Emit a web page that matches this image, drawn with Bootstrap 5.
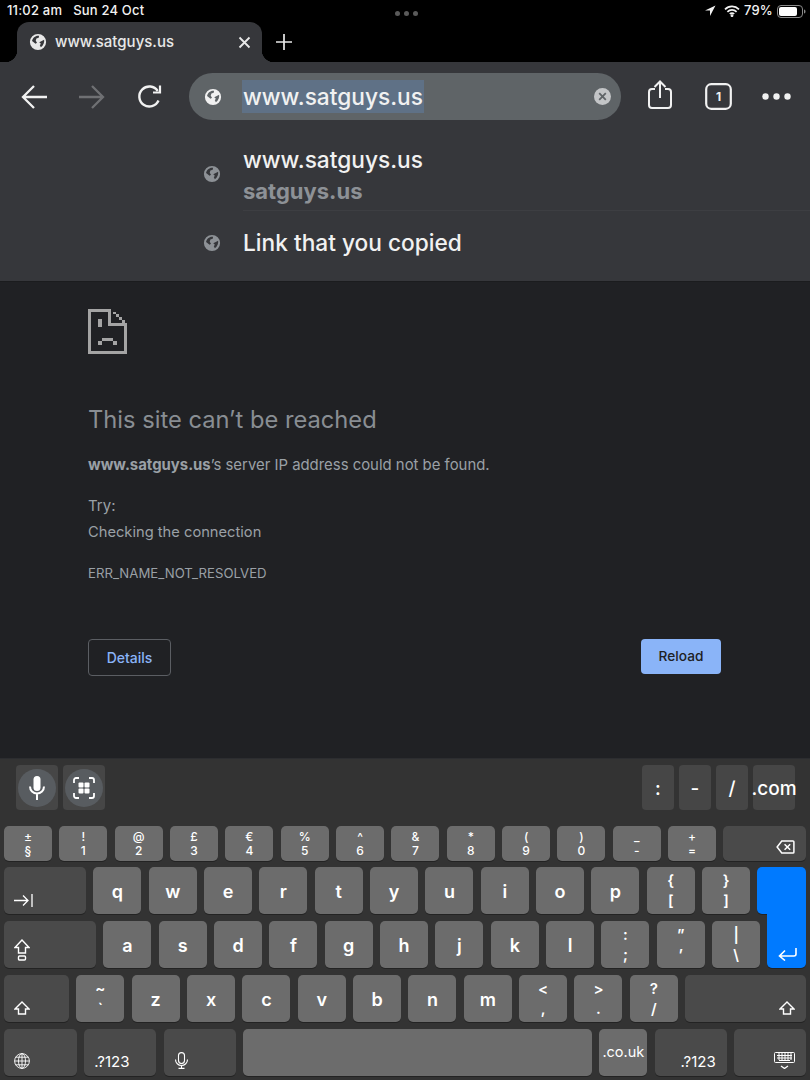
<!DOCTYPE html>
<html lang="en">
<head>
    <meta charset="UTF-8">
    <meta name="viewport" content="width=device-width, initial-scale=1.0">
    <title>This site can't be reached</title>
    <link href="https://cdn.jsdelivr.net/npm/bootstrap@5.3.0/dist/css/bootstrap.min.css" rel="stylesheet">
    <style>
        html, body { width: 810px; height: 1080px; overflow: hidden; background: #000; }
        body { font-family: Inter, "Liberation Sans", sans-serif; color: #fff; }
        .status-strip { height: 22px; padding: 0 4px 0 7px; font-size: 13px; font-weight: 500; letter-spacing: .2px; color: #f2f2f2; }
        .status-strip > div { flex: 1 1 0; }
        .status-dots span { width: 5px; height: 5px; border-radius: 50%; background: #5a5a5a; }
        .tab-strip { height: 40px; padding-left: 17px; }
        .chrome-tab { position: relative; width: 245px; background: #36373b; border-radius: 12px 12px 0 0; padding: 0 11px 0 12px; font-size: 15px; font-weight: 500; color: #e8e8e8; }
        .chrome-tab::before, .chrome-tab::after { content: ""; position: absolute; bottom: 0; width: 12px; height: 12px; }
        .chrome-tab::before { left: -12px; background: radial-gradient(circle at 0 0, #000 12px, #36373b 12.5px); }
        .chrome-tab::after { right: -12px; background: radial-gradient(circle at 100% 0, #000 12px, #36373b 12.5px); }
        .tab-title { margin-left: 8px; }
        .plus-btn { margin-left: 5px; }
        .tool-area { height: 220px; background: #36373b; border-bottom: 1px solid #1b1c1e; }
        .nav-row { height: 58px; padding: 11px 5px 0; }
        .tool-btn { width: 58px; height: 47px; }
        .omni-box { width: 432px; height: 47px; margin: 0 10px; background: #5f6467; border-radius: 24px; padding: 0 10px 0 15px; }
        .omni-sel { margin-left: 20px; height: 33px; background: #5f7186; padding: 0 1px; font-size: 22.7px; font-weight: 500; line-height: 34px; color: #f1f1f1; }
        .sugg-row { padding-left: 243px; position: relative; font-size: 22.7px; font-weight: 500; color: #f1f1f1; }
        .sugg-first { margin-top: 20px; height: 71px; }
        .sugg-first .sugg-inner { border-bottom: 1px solid #3d3e42; height: 71px; padding-top: 3px; }
        .sugg-second { height: 64px; }
        .sugg-ico { position: absolute; left: 203px; }
        .sugg-first .sugg-ico { margin-top: -3px; }
        .sugg-sub { font-size: 22px; font-weight: 700; color: #8d9196; line-height: 28px; }
        .sugg-main { line-height: 34px; }
        .page-area { height: 476px; background: #202124; padding: 26px 89px 0 88px; color: #9aa0a6; }
        .sad-page { margin-left: 0; }
        .err-title { font-size: 23.7px; font-weight: 400; line-height: 30px; margin: 50px 0 0; color: #898e93; }
        .err-host { font-size: 14.9px; margin: 20px 0 0; line-height: 20px; }
        .err-try { font-size: 15px; margin: 21px 0 0; line-height: 20px; }
        .err-check { font-size: 14.7px; margin: 6px 0 0; line-height: 20px; }
        .err-code { font-size: 13.2px; margin: 21px 0 0; line-height: 20px; }
        .btn-row { margin-top: 56px; }
        .btn.err-details { width: 83px; height: 37px; padding: 0; border: 1px solid #5b5e63; color: #8ab4f8; background: transparent; font-size: 14px; font-weight: 500; border-radius: 4px; }
        .btn.err-reload { width: 80px; height: 35px; padding: 0; border: 0; color: #202124; background: #8ab4f8; font-size: 13.7px; font-weight: 500; border-radius: 4px; }
        .kbd-area { height: 322px; background: #333; border-top: 1px solid #2c2d30; padding: 6px 4px 0; }
        .assist-row { height: 46px; padding: 0 11px 0 12px; margin-bottom: 15px; gap: 5px; }
        .assist-key { height: 45px; background: #464646; border-radius: 4px; font-size: 19px; font-weight: 500; }
        .assist-icon { width: 42px; }
        .assist-sym { width: 32px; padding-top: 3px; }
        .assist-com { width: 42px; padding-top: 3px; }
        .assist-circle { width: 38px; height: 38px; border-radius: 50%; background: #585c60; }
        .key-row { gap: 7.35px; margin-bottom: 7px; height: 47px; }
        .key-row-top { height: 35px; margin-bottom: 6px; }
        .kb-key { width: 48px; flex: none; background: #6c6c6c; border-radius: 5px; box-shadow: 0 1px 0 #232323; font-size: 18px; font-weight: 600; line-height: 1; padding-top: 2px; }
        .kb-pair { font-size: 15px; font-weight: 600; gap: 5px; padding-top: 0; }
        .key-row-top .kb-pair { font-size: 12px; gap: 2px; font-weight: 500; }
        .kb-dark { background: #4a4a4a; padding: 0 0 7px 10px; font-weight: 400; font-size: 15px; }
        .kb-dark-r { padding: 0 11px 7px 0; }
        .kb-space { flex: 1 1 0; background: #6c6c6c; }
        .kb-fill { flex: 1 1 0; width: auto; }
        .w-tab { width: 82px; }
        .w-caps { width: 92px; }
        .w-shift { width: 65px; }
        .w-globe { width: 73px; }
        .w-sym { width: 72px; }
        .kb-couk { font-size: 14.5px; font-weight: 400; padding-top: 0; }
        .ret-top { background: #007aff; border-bottom-right-radius: 0; padding: 0; }
        .ret-bottom { background: #007aff; height: 54px; margin-top: -7px; border-top-left-radius: 0; border-top-right-radius: 0; padding: 0 9px 7px 0; }
    </style>
</head>
<body>
    <svg width="0" height="0" class="position-absolute">
        <symbol id="globe" viewBox="0 0 20 20">
            <path fill="currentColor" fill-rule="evenodd" d="M10 1a9 9 0 1 0 0 18a9 9 0 0 0 0-18ZM3.4 8.8C4 5.6 6.8 3 10 3h1.2l-.4 2.2-2.6 1-.7 2.4 1.4 2.2-1.6 1.2ZM11.4 10.2l5.4-2.6c.5 3-.8 6.400-3.600 8.200l-1.200-2.200 1.200-1.600Z"/>
        </symbol>
    </svg>

    <div class="status-strip d-flex align-items-center">
        <div>11:02 am &nbsp; Sun 24 Oct</div>
        <div class="status-dots d-flex justify-content-center gap-1 mt-1"><span></span><span></span><span></span></div>
        <div class="d-flex justify-content-end align-items-center">
            <svg width="12" height="12" viewBox="0 0 12 12"><path fill="#f2f2f2" d="M11.500.500 1 5.500h5v5.500Z"/></svg>
            <svg class="ms-2" width="16" height="12" viewBox="0 0 16 12" fill="none" stroke="#f2f2f2" stroke-width="1.700"><path d="M1 4.300a10 10 0 0 1 14 0M3.400 6.800a6.500 6.500 0 0 1 9.200 0M5.800 9a3 3 0 0 1 4.400 0"/><circle cx="8" cy="10.600" r=".6" fill="#f2f2f2"/></svg>
            <span class="ms-1">79%</span>
            <svg class="ms-1" width="29" height="13" viewBox="0 0 29 13"><rect x=".5" y=".5" width="25" height="12" rx="3.500" fill="none" stroke="#8a8a8a"/><rect x="2" y="2" width="18" height="9" rx="2" fill="#fff"/><path fill="#8a8a8a" d="M27 4.500c1 .3 1.500 1 1.500 2s-.5 1.700-1.500 2Z"/></svg>
        </div>
    </div>

    <div class="tab-strip d-flex">
        <div class="chrome-tab d-flex align-items-center">
            <svg width="18" height="18" class="flex-none"><use href="#globe"/></svg>
            <span class="tab-title flex-grow-1">www.satguys.us</span>
            <svg width="13" height="13" viewBox="0 0 13 13" stroke="#e8e8e8" stroke-width="1.800"><path d="M1.500 1.500l10 10M11.500 1.500l-10 10"/></svg>
        </div>
        <div class="plus-btn d-flex align-items-center ps-2">
            <svg width="18" height="18" viewBox="0 0 18 18" stroke="#e8e8e8" stroke-width="1.700"><path d="M9 1v16M1 9h16"/></svg>
        </div>
    </div>

    <div class="tool-area">
        <div class="nav-row d-flex">
            <div class="tool-btn d-flex align-items-center justify-content-center">
                <svg width="28" height="26" viewBox="0 0 28 26" fill="none" stroke="#f1f1f1" stroke-width="2.300"><path d="M27 13H3M14 2 3 13l11 11"/></svg>
            </div>
            <div class="tool-btn d-flex align-items-center justify-content-center">
                <svg width="28" height="26" viewBox="0 0 28 26" fill="none" stroke="#6f7073" stroke-width="2.300"><path d="M1 13h24M14 2l11 11-11 11"/></svg>
            </div>
            <div class="tool-btn d-flex align-items-center justify-content-center">
                <svg width="26" height="26" viewBox="0 0 26 26" fill="none" stroke="#f1f1f1" stroke-width="2.400"><path d="M21.500 16.500a10 10 0 1 1-.8-9.500"/><path d="M23 1.500V8.500H16" stroke-width="2.200"/></svg>
            </div>
            <div class="omni-box d-flex align-items-center">
                <svg width="18" height="18" class="flex-none" color="#f1f1f1"><use href="#globe"/></svg>
                <span class="omni-sel">www.satguys.us</span>
                <svg class="ms-auto" width="17" height="17" viewBox="0 0 17 17"><circle cx="8.500" cy="8.500" r="8.500" fill="#c3c5c7"/><path d="M5.200 5.200l6.600 6.600M11.800 5.200l-6.600 6.600" stroke="#5f6467" stroke-width="1.800"/></svg>
            </div>
            <div class="tool-btn d-flex align-items-center justify-content-center">
                <svg class="mb-1" width="24" height="29" viewBox="0 0 24 29" fill="none" stroke="#f1f1f1" stroke-width="2"><path d="M7 9H4a3 3 0 0 0-3 3v13a3 3 0 0 0 3 3h16a3 3 0 0 0 3-3V12a3 3 0 0 0-3-3h-3M12 18V2M6.500 7 12 1.500 17.500 7"/></svg>
            </div>
            <div class="tool-btn d-flex align-items-center justify-content-center">
                <svg width="27" height="27" viewBox="0 0 27 27"><rect x="1.200" y="1.200" width="24.600" height="24.600" rx="5" fill="none" stroke="#f1f1f1" stroke-width="2.200"/><text x="13.500" y="18" text-anchor="middle" font-size="12" font-weight="700" fill="#f1f1f1" font-family="Inter, sans-serif">1</text></svg>
            </div>
            <div class="tool-btn d-flex align-items-center justify-content-center gap-1">
                <svg width="29" height="7" viewBox="0 0 29 7" fill="#f1f1f1"><circle cx="3.500" cy="3.500" r="3.200"/><circle cx="14.500" cy="3.500" r="3.200"/><circle cx="25.500" cy="3.500" r="3.200"/></svg>
            </div>
        </div>
        <div class="sugg-row sugg-first d-flex align-items-center">
            <svg class="sugg-ico" width="18" height="18" color="#8d9196"><use href="#globe"/></svg>
            <div class="sugg-inner flex-grow-1">
                <div class="sugg-main">www.satguys.us</div>
                <div class="sugg-sub">satguys.us</div>
            </div>
        </div>
        <div class="sugg-row sugg-second d-flex align-items-center">
            <svg class="sugg-ico" width="18" height="18" color="#8d9196"><use href="#globe"/></svg>
            <div>Link that you copied</div>
        </div>
    </div>

    <div class="page-area">
        <svg class="d-block sad-page" width="39" height="47" viewBox="0 0 40 47" fill="#a4a4a4" shape-rendering="crispEdges">
            <path d="M0 0h22v3H3v41h34V18h3v29H0Z"/>
            <path d="M21 0h3v15h16v3H21Z"/>
            <path d="M26 3h3v3h-3ZM29 6h3v3h-3ZM32 9h3v3h-3ZM35 12h3v3h-3Z"/>
            <path d="M10 11h4v8h-4ZM14 30h12v3H14ZM10 33h4v4h-4ZM26 33h4v4h-4Z"/>
        </svg>
        <h1 class="err-title">This site can’t be reached</h1>
        <p class="err-host"><strong>www.satguys.us</strong>’s server IP address could not be found.</p>
        <p class="err-try">Try:</p>
        <p class="err-check">Checking the connection</p>
        <p class="err-code">ERR_NAME_NOT_RESOLVED</p>
        <div class="btn-row d-flex justify-content-between align-items-start">
            <button class="btn err-details">Details</button>
            <button class="btn err-reload">Reload</button>
        </div>
    </div>

    <div class="kbd-area">
        <div class="assist-row d-flex">
            <div class="assist-key assist-icon d-flex align-items-center justify-content-center">
                <div class="assist-circle d-flex align-items-center justify-content-center">
                    <svg width="18" height="26" viewBox="0 0 18 26" fill="none" stroke="#fff"><rect x="5.500" y="1" width="7" height="15" rx="3.500" fill="#fff" stroke="none"/><path stroke-width="2" d="M2 11.500a7 7 0 0 0 14 0M9 19v6"/></svg>
                </div>
            </div>
            <div class="assist-key assist-icon d-flex align-items-center justify-content-center">
                <div class="assist-circle d-flex align-items-center justify-content-center">
                    <svg width="22" height="22" viewBox="0 0 22 22" fill="none" stroke="#fff" stroke-width="1.800"><path d="M1 6V3a2 2 0 0 1 2-2h3M16 1h3a2 2 0 0 1 2 2v3M21 16v3a2 2 0 0 1-2 2h-3M6 21H3a2 2 0 0 1-2-2v-3"/><g fill="#fff" stroke="none"><rect x="5.500" y="5.500" width="5" height="5" rx="1"/><rect x="11.500" y="5.500" width="5" height="5" rx="1"/><rect x="5.500" y="11.500" width="5" height="5" rx="1"/><rect x="11.500" y="11.500" width="5" height="5" rx="1"/></g></svg>
                </div>
            </div>
            <div class="ms-auto assist-key assist-sym d-flex align-items-center justify-content-center">:</div>
            <div class="assist-key assist-sym d-flex align-items-center justify-content-center">-</div>
            <div class="assist-key assist-sym d-flex align-items-center justify-content-center">/</div>
            <div class="assist-key assist-com d-flex align-items-center justify-content-center">.com</div>
        </div>

        <div class="key-row key-row-top d-flex">
            <div class="kb-key kb-pair d-flex flex-column align-items-center justify-content-center"><span>±</span><span>§</span></div>
            <div class="kb-key kb-pair d-flex flex-column align-items-center justify-content-center"><span>!</span><span>1</span></div>
            <div class="kb-key kb-pair d-flex flex-column align-items-center justify-content-center"><span>@</span><span>2</span></div>
            <div class="kb-key kb-pair d-flex flex-column align-items-center justify-content-center"><span>£</span><span>3</span></div>
            <div class="kb-key kb-pair d-flex flex-column align-items-center justify-content-center"><span>€</span><span>4</span></div>
            <div class="kb-key kb-pair d-flex flex-column align-items-center justify-content-center"><span>%</span><span>5</span></div>
            <div class="kb-key kb-pair d-flex flex-column align-items-center justify-content-center"><span>^</span><span>6</span></div>
            <div class="kb-key kb-pair d-flex flex-column align-items-center justify-content-center"><span>&amp;</span><span>7</span></div>
            <div class="kb-key kb-pair d-flex flex-column align-items-center justify-content-center"><span>*</span><span>8</span></div>
            <div class="kb-key kb-pair d-flex flex-column align-items-center justify-content-center"><span>(</span><span>9</span></div>
            <div class="kb-key kb-pair d-flex flex-column align-items-center justify-content-center"><span>)</span><span>0</span></div>
            <div class="kb-key kb-pair d-flex flex-column align-items-center justify-content-center"><span>_</span><span>-</span></div>
            <div class="kb-key kb-pair d-flex flex-column align-items-center justify-content-center"><span>+</span><span>=</span></div>
            <div class="kb-key kb-dark kb-dark-r kb-fill d-flex align-items-end justify-content-end">
                <svg width="19" height="14" viewBox="0 0 20 15" fill="none" stroke="#fff" stroke-width="1.600"><path d="M6 1h12a1 1 0 0 1 1 1v11a1 1 0 0 1-1 1H6L1 7.500Z"/><path d="M9 4.500l6 6M15 4.500l-6 6"/></svg>
            </div>
        </div>

        <div class="key-row d-flex">
            <div class="kb-key kb-dark w-tab d-flex align-items-end">
                <svg width="19" height="13" viewBox="0 0 19 13" fill="none" stroke="#fff" stroke-width="1.300"><path d="M0 6.500h14M9 1.500l5 5-5 5M18 0v13"/></svg>
            </div>
            <div class="kb-key d-flex align-items-center justify-content-center">q</div>
            <div class="kb-key d-flex align-items-center justify-content-center">w</div>
            <div class="kb-key d-flex align-items-center justify-content-center">e</div>
            <div class="kb-key d-flex align-items-center justify-content-center">r</div>
            <div class="kb-key d-flex align-items-center justify-content-center">t</div>
            <div class="kb-key d-flex align-items-center justify-content-center">y</div>
            <div class="kb-key d-flex align-items-center justify-content-center">u</div>
            <div class="kb-key d-flex align-items-center justify-content-center">i</div>
            <div class="kb-key d-flex align-items-center justify-content-center">o</div>
            <div class="kb-key d-flex align-items-center justify-content-center">p</div>
            <div class="kb-key kb-pair d-flex flex-column align-items-center justify-content-center"><span>{</span><span>[</span></div>
            <div class="kb-key kb-pair d-flex flex-column align-items-center justify-content-center"><span>}</span><span>]</span></div>
            <div class="kb-key ret-top kb-fill"></div>
        </div>

        <div class="key-row d-flex">
            <div class="kb-key kb-dark w-caps d-flex align-items-end">
                <svg width="16" height="22" viewBox="0 0 16 22" fill="none" stroke="#fff" stroke-width="1.400"><path d="M8 1 1 8.500h3.500V14h7V8.500H15Z"/><rect x="4.500" y="17" width="7" height="4" rx="1"/></svg>
            </div>
            <div class="kb-key d-flex align-items-center justify-content-center">a</div>
            <div class="kb-key d-flex align-items-center justify-content-center">s</div>
            <div class="kb-key d-flex align-items-center justify-content-center">d</div>
            <div class="kb-key d-flex align-items-center justify-content-center">f</div>
            <div class="kb-key d-flex align-items-center justify-content-center">g</div>
            <div class="kb-key d-flex align-items-center justify-content-center">h</div>
            <div class="kb-key d-flex align-items-center justify-content-center">j</div>
            <div class="kb-key d-flex align-items-center justify-content-center">k</div>
            <div class="kb-key d-flex align-items-center justify-content-center">l</div>
            <div class="kb-key kb-pair d-flex flex-column align-items-center justify-content-center"><span>:</span><span>;</span></div>
            <div class="kb-key kb-pair d-flex flex-column align-items-center justify-content-center"><span>”</span><span>’</span></div>
            <div class="kb-key kb-pair d-flex flex-column align-items-center justify-content-center"><span>|</span><span>\</span></div>
            <div class="kb-key ret-bottom kb-fill d-flex align-items-end justify-content-end">
                <svg width="19" height="14" viewBox="0 0 19 14" fill="none" stroke="#fff" stroke-width="1.600"><path d="M18 1v6a2 2 0 0 1-2 2H2M7 3.500 1.500 9 7 13.500"/></svg>
            </div>
        </div>

        <div class="key-row d-flex">
            <div class="kb-key kb-dark w-shift d-flex align-items-end">
                <svg width="16" height="14" viewBox="0 0 16 14" fill="none" stroke="#fff" stroke-width="1.400"><path d="M8 1 1 8h3.500v5h7V8H15Z"/></svg>
            </div>
            <div class="kb-key kb-pair d-flex flex-column align-items-center justify-content-center"><span>~</span><span>`</span></div>
            <div class="kb-key d-flex align-items-center justify-content-center">z</div>
            <div class="kb-key d-flex align-items-center justify-content-center">x</div>
            <div class="kb-key d-flex align-items-center justify-content-center">c</div>
            <div class="kb-key d-flex align-items-center justify-content-center">v</div>
            <div class="kb-key d-flex align-items-center justify-content-center">b</div>
            <div class="kb-key d-flex align-items-center justify-content-center">n</div>
            <div class="kb-key d-flex align-items-center justify-content-center">m</div>
            <div class="kb-key kb-pair d-flex flex-column align-items-center justify-content-center"><span>&lt;</span><span>,</span></div>
            <div class="kb-key kb-pair d-flex flex-column align-items-center justify-content-center"><span>&gt;</span><span>.</span></div>
            <div class="kb-key kb-pair d-flex flex-column align-items-center justify-content-center"><span>?</span><span>/</span></div>
            <div class="kb-key kb-dark kb-dark-r kb-fill d-flex align-items-end justify-content-end">
                <svg width="16" height="14" viewBox="0 0 16 14" fill="none" stroke="#fff" stroke-width="1.400"><path d="M8 1 1 8h3.500v5h7V8H15Z"/></svg>
            </div>
        </div>

        <div class="key-row d-flex">
            <div class="kb-key kb-dark w-globe d-flex align-items-end">
                <svg width="16" height="16" viewBox="0 0 16 16" fill="none" stroke="#fff" stroke-width=".9"><circle cx="8" cy="8" r="7.400"/><ellipse cx="8" cy="8" rx="3.500" ry="7.400"/><path d="M8 .6v14.800M.6 8h14.800M1.700 4.200h12.600M1.700 11.800h12.600"/></svg>
            </div>
            <div class="kb-key kb-dark w-sym d-flex align-items-end">.?123</div>
            <div class="kb-key kb-dark w-sym d-flex align-items-end">
                <svg width="15" height="17" viewBox="0 0 15 17" fill="none" stroke="#fff" stroke-width="1.100"><rect x="4.500" y=".6" width="6" height="11" rx="3"/><path d="M1.500 7.500a6 6 0 0 0 12 0M7.500 13.500V16M4.500 16.400h6"/></svg>
            </div>
            <div class="kb-key kb-space"></div>
            <div class="kb-key kb-couk d-flex align-items-center justify-content-center">.co.uk</div>
            <div class="kb-key kb-dark w-sym d-flex align-items-end justify-content-end kb-dark-r">.?123</div>
            <div class="kb-key kb-dark kb-dark-r w-sym d-flex align-items-end justify-content-end">
                <svg width="21" height="17" viewBox="0 0 21 17" fill="none" stroke="#fff" stroke-width="1"><rect x=".5" y=".5" width="20" height="10" rx="1"/><path d="M3 3.500h15M3 6h15M5 8.500h11M5 1v7M8 1v7M11 1v7M14 1v7M17 1v7"/><path d="M7 14l3.500 2.500L14 14" stroke-width="1.300"/></svg>
            </div>
        </div>
    </div>
    <script src="https://cdn.jsdelivr.net/npm/bootstrap@5.3.0/dist/js/bootstrap.bundle.min.js"></script>
</body>
</html>
